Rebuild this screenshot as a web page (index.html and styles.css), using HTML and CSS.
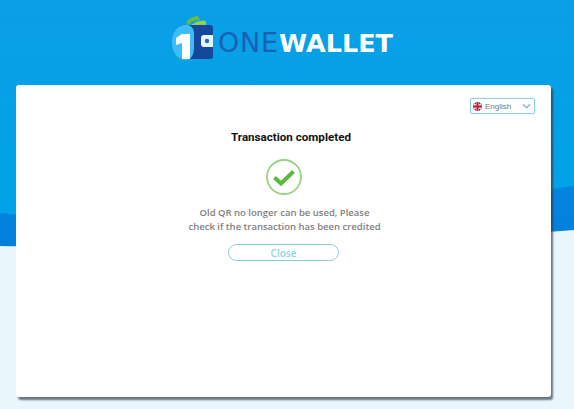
FILE: index.html
```html
<!DOCTYPE html>
<html lang="en">
<head>
    <meta charset="UTF-8">
    <meta name="viewport" content="width=device-width, initial-scale=1.0">
    <title>OneWallet</title>
    <link rel="stylesheet" href="styles.css">
</head>
<body>
    <svg class="backdrop" viewBox="0 0 574 409" width="574" height="409" aria-hidden="true">
        <defs>
            <linearGradient id="skyTop" x1="0" y1="0" x2="0" y2="1">
                <stop offset="0" stop-color="#0a9fe6"/>
                <stop offset="1" stop-color="#00a2e8"/>
            </linearGradient>
            <linearGradient id="skyLow" x1="0" y1="0" x2="0" y2="1">
                <stop offset="0" stop-color="#0a90e4"/>
                <stop offset="1" stop-color="#0480dc"/>
            </linearGradient>
        </defs>
        <rect width="574" height="409" fill="#e9f6fe"/>
        <path d="M0 246 C60 247 130 244 300 240 C420 237 500 236 574 230 V0 H0 Z" fill="url(#skyLow)"/>
        <path d="M0 213 C120 225 300 222 574 186 V0 H0 Z" fill="url(#skyTop)"/>
    </svg>

    <div class="page">
        <header class="brand">
            <svg class="brand-icon" viewBox="0 0 46 46" width="46" height="46" aria-hidden="true">
                <path d="M14 8 C18 4 22 2 26 2 L28 6 C22 6 19 8 17 11 Z" fill="#6dbb3e"/>
                <path d="M19 11 C24 7 29 6 34 7 L34 11 Z" fill="#93d152"/>
                <path d="M16 11 H38 Q41 11 41 14 V42 Q41 45 38 45 H16 Z" fill="#15479c"/>
                <path d="M32 21 H41 V33 H32 Q29 33 29 30 V24 Q29 21 32 21 Z" fill="#e8f5fd"/>
                <circle cx="35" cy="27" r="2.2" fill="#1b6fc2"/>
                <path d="M13 11 C5 12 0 19 0 28 C0 38 5 45 13 46 C19 46 22 41 22 33 V19 C22 14 18 10 13 11 Z" fill="#3dbcf5"/>
                <path d="M10 20 H18 V45 H10 V29 L4 31 V24 Z" fill="#ffffff"/>
            </svg>
            <div class="brand-name"><span class="brand-one">ONE</span><span class="brand-wallet">WALLET</span></div>
        </header>

        <main class="card">
            <div class="lang-row">
                <div class="lang-select">
                    <svg class="flag" viewBox="0 0 10 10" width="9" height="9" aria-hidden="true">
                        <circle cx="5" cy="5" r="5" fill="#5a3a6e"/>
                        <path d="M1 2 L9 8 M9 2 L1 8" stroke="#f3dfe3" stroke-width="1.6"/>
                        <path d="M5 0 V10 M0 5 H10" stroke="#f3dfe3" stroke-width="3"/>
                        <path d="M5 0 V10 M0 5 H10" stroke="#c9182e" stroke-width="2"/>
                    </svg>
                    <span class="lang-name">English</span>
                    <svg class="chevron" viewBox="0 0 10 6" width="9" height="6" aria-hidden="true">
                        <path d="M1 1 L5 5 L9 1" fill="none" stroke="#86bcd0" stroke-width="1.6"/>
                    </svg>
                </div>
            </div>

            <h1 class="title">Transaction completed</h1>

            <svg class="check" viewBox="0 0 36 36" width="36" height="36" aria-hidden="true">
                <circle cx="18" cy="18" r="17" fill="#fff" stroke="#9ad285" stroke-width="1.8"/>
                <path d="M8.5 18.5 L15 24.5 L27.5 12.5" fill="none" stroke="#5cb83c" stroke-width="4"/>
            </svg>

            <p class="message">Old QR no longer can be used, Please<br>check if the transaction has been credited</p>

            <button class="close-btn">Close</button>
        </main>
    </div>
</body>
</html>
```

FILE: styles.css
```css
html, body {
    margin: 0;
    padding: 0;
}

body {
    width: 574px;
    height: 409px;
    overflow: hidden;
    position: relative;
    font-family: "Open Sans", "Noto Sans", sans-serif;
    background-color: #e9f6fe;
}

.backdrop {
    position: absolute;
    top: 0;
    left: 0;
}

.page {
    position: relative;
    padding: 14px 23px 0 16px;
}

.brand {
    height: 71px;
    box-sizing: border-box;
    padding: 0 0 0 156px;
    display: flex;
    align-items: flex-start;
    font-family: "DejaVu Sans", sans-serif;
}

.brand-icon {
    flex: none;
}

.brand-name {
    margin-top: 14px;
    font-size: 25.5px;
    line-height: 30px;
    white-space: nowrap;
}

.brand-one {
    color: #1a5fb4;
    font-weight: 400;
    font-size: 27px;
    letter-spacing: 0.8px;
}

.brand-wallet {
    color: #fff;
    font-weight: 700;
}

.card {
    height: 312px;
    background-color: #fff;
    border-radius: 3px;
    box-shadow: 2px 3px 2px rgba(40, 50, 60, 0.65);
    display: flex;
    flex-direction: column;
    align-items: center;
}

.lang-row {
    align-self: stretch;
    display: flex;
    justify-content: flex-end;
    padding: 13px 16px 0 0;
}

.lang-select {
    width: 65px;
    height: 16px;
    box-sizing: border-box;
    border: 1px solid #8fd0e4;
    border-radius: 2px;
    display: flex;
    align-items: center;
    padding: 0 2px;
    box-shadow: 0 0 1px #7cc3da;
}

.flag {
    margin-right: 3px;
    flex: none;
}

.lang-name {
    font-family: "Liberation Sans", Arial, sans-serif;
    font-size: 8px;
    color: #777;
}

.chevron {
    margin-left: auto;
    margin-right: 1px;
}

.title {
    margin: 15px 0 0 15px;
    font-family: Roboto, sans-serif;
    font-size: 11.6px;
    line-height: 16px;
    font-weight: 700;
    color: #111;
}

.check {
    margin-top: 14px;
}

.message {
    margin: 11px 0 0 2px;
    font-size: 9.5px;
    line-height: 14px;
    font-weight: 600;
    color: #808080;
    text-align: center;
}

.close-btn {
    margin-top: 10px;
    width: 111px;
    height: 17px;
    padding: 0;
    background-color: #fff;
    border: 1px solid #8ccde0;
    border-radius: 9px;
    color: #8fd3e6;
    font-family: inherit;
    font-size: 10px;
    font-weight: 600;
    cursor: pointer;
}
```
